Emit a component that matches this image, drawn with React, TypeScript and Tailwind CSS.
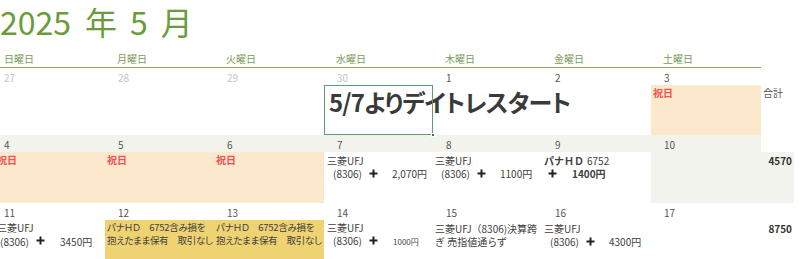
import React from "react";

const Plus = () => (
  <span className="inline-flex w-[10px] h-[13px] items-center justify-center">
    <svg width="9" height="9" viewBox="0 0 9 9" className="block">
      <path d="M4.5 0.5V8.5M0.5 4.5H8.5" stroke="#222" strokeWidth="2" fill="none" />
    </svg>
  </span>
);

const Holiday = ({ className = "" }: { className?: string }) => (
  <div className={"pl-[2px] pt-[1px] leading-[13px] text-[10px] font-bold text-[#f55050] " + className}>祝日</div>
);

const Code = ({ w = "w-[41px] pl-[6px]" }: { w?: string }) => (
  <span className={"inline-block " + w}>(8306)</span>
);

export default function App() {
  const cols = "grid grid-cols-[105px_109px_110px_109px_109px_109px_110px_33px]";
  return (
    <div className="relative w-[800px] h-[259px] overflow-hidden bg-white text-[#404040] [font-family:'Noto_Sans_CJK_JP','Noto_Sans',sans-serif]">
      {/* Title */}
      <div className="flex h-[46px] leading-[46px] text-[32px] text-[#6b9c3b] -translate-y-[2px]">
        <span>2025</span>
        <span className="ml-[14px]">年</span>
        <span className="ml-[13px]">5</span>
        <span className="ml-[13px]">月</span>
      </div>

      {/* Weekday header */}
      <div className={cols + " w-[794px] h-[22px]"}>
        {["日曜日", "月曜日", "火曜日", "水曜日", "木曜日", "金曜日", "土曜日"].map((d, i) => (
          <div
            key={d}
            className={
              (i === 0 ? "pl-[4px] " : "pl-[12px] ") +
              "pt-[6px] leading-[14px] text-[10px] text-[#7c9a5c] border-b border-[#8aa870]"
            }
          >
            {d}
          </div>
        ))}
        <div />
      </div>

      {/* Week 1 */}
      <div className={cols + " w-[794px] grid-rows-[17px_50px] text-[10px]"}>
        {[
          ["27", "text-[#c4c4c4]"],
          ["28", "text-[#c4c4c4]"],
          ["29", "text-[#c4c4c4]"],
          ["30", "text-[#c4c4c4]"],
          ["1", "text-[#555]"],
          ["2", "text-[#555]"],
          ["3", "text-[#555]"],
        ].map(([n, c], i) => (
          <div key={n} className={(i === 0 ? "pl-[4px] " : "pl-[13px] ") + "pt-[3px] leading-[14px] " + c}>
            {n}
          </div>
        ))}
        <div />
        {/* content */}
        <div />
        <div />
        <div />
        <div className="relative z-10">
          <div className="pl-[5px] pt-[3px] leading-[28px] text-[24px] font-bold tracking-[-0.8px] text-[#3a3a3a] whitespace-nowrap [font-feature-settings:'palt']">
            5/7よりデイトレスタート
          </div>
          <div className="absolute inset-0 border border-[#5f9e74]" />
          <div className="absolute right-[-2px] bottom-[-2px] w-[4px] h-[4px] bg-[#2f7d4a] border border-white" />
        </div>
        <div />
        <div />
        <div className="bg-[#fbe8cd]">
          <Holiday />
        </div>
        <div className="pl-[2px] pt-[1px] leading-[13px] text-[10px] text-[#555]">合計</div>
      </div>

      {/* Week 2 */}
      <div className={cols + " w-[794px] grid-rows-[17px_51px] text-[10px]"}>
        {["4", "5", "6", "7", "8", "9", "10"].map((n, i) => (
          <div
            key={n}
            className={(i === 0 ? "pl-[4px] " : "pl-[13px] ") + "pt-[3px] leading-[14px] text-[#555] bg-[#f3f3ee]"}
          >
            {n}
          </div>
        ))}
        <div />
        {/* content */}
        <div className="bg-[#fbe8cd]">
          <Holiday className="ml-[-5px]" />
        </div>
        <div className="bg-[#fbe8cd]">
          <Holiday />
        </div>
        <div className="bg-[#fbe8cd]">
          <Holiday />
        </div>
        <div className="pl-[3px] pt-[2px] leading-[13px] text-[10px] whitespace-nowrap">
          <div>三菱UFJ</div>
          <div className="flex">
            <Code />
            <Plus />
            <span className="ml-[14px]">2,070円</span>
          </div>
        </div>
        <div className="pl-[2px] pt-[2px] leading-[13px] text-[10px] whitespace-nowrap">
          <div>三菱UFJ</div>
          <div className="flex">
            <Code />
            <Plus />
            <span className="ml-[14px]">1100円</span>
          </div>
        </div>
        <div className="pl-[2px] pt-[2px] leading-[13px] text-[10px] whitespace-nowrap">
          <div className="flex">
            <span className="inline-block w-[43px] font-bold">パナＨＤ</span>
            <span>6752</span>
          </div>
          <div className="flex">
            <span className="inline-block w-[3px]" />
            <Plus />
            <span className="ml-[15px] font-bold">1400円</span>
          </div>
        </div>
        <div className="bg-[#f3f3ee]" />
        <div className="bg-[#f3f3ee] pr-[2px] pt-[2px] leading-[13px] text-right font-bold text-[#333]">4570</div>
      </div>

      {/* Week 3 */}
      <div className={cols + " w-[794px] grid-rows-[17px_40px] text-[10px]"}>
        {["11", "12", "13", "14", "15", "16", "17"].map((n, i) => (
          <div key={n} className={(i === 0 ? "pl-[4px] " : "pl-[13px] ") + "pt-[3px] leading-[14px] text-[#555]"}>
            {n}
          </div>
        ))}
        <div />
        {/* content */}
        <div className="ml-[-3px] pt-[1px] text-[10px] whitespace-nowrap">
          <div className="leading-[13px]">三菱UFJ</div>
          <div className="flex leading-[16px] pl-[3px]">
            <Code w="w-[35px]" />
            <Plus />
            <span className="ml-[15px]">3450円</span>
          </div>
        </div>
        <div className="bg-[#efd372] pl-[2px] pt-[1px] leading-[13px] text-[9.5px] tracking-[-0.3px] whitespace-nowrap overflow-hidden [font-feature-settings:'palt']">
          <div>パナＨＤ　6752含み損を</div>
          <div>抱えたまま保有　取引なし</div>
        </div>
        <div className="bg-[#efd372] pl-[2px] pt-[1px] leading-[13px] text-[9.5px] tracking-[-0.3px] whitespace-nowrap overflow-hidden [font-feature-settings:'palt']">
          <div>パナＨＤ　6752含み損を</div>
          <div>抱えたまま保有　取引なし</div>
        </div>
        <div className="pl-[3px] pt-[1px] leading-[13px] text-[10px] whitespace-nowrap">
          <div>三菱UFJ</div>
          <div className="flex items-baseline">
            <Code />
            <Plus />
            <span className="ml-[15px] text-[8px]">1000円</span>
          </div>
        </div>
        <div className="pl-[2px] pt-[2px] leading-[13px] text-[10px] whitespace-nowrap">
          <div>三菱UFJ（8306)決算跨</div>
          <div>ぎ 売指値通らず</div>
        </div>
        <div className="pl-[2px] pt-[2px] leading-[13px] text-[10px] whitespace-nowrap">
          <div>三菱UFJ</div>
          <div className="flex">
            <Code />
            <Plus />
            <span className="ml-[14px]">4300円</span>
          </div>
        </div>
        <div />
        <div className="pr-[2px] pt-[2px] leading-[13px] text-right font-bold text-[#333]">8750</div>
      </div>
    </div>
  );
}
